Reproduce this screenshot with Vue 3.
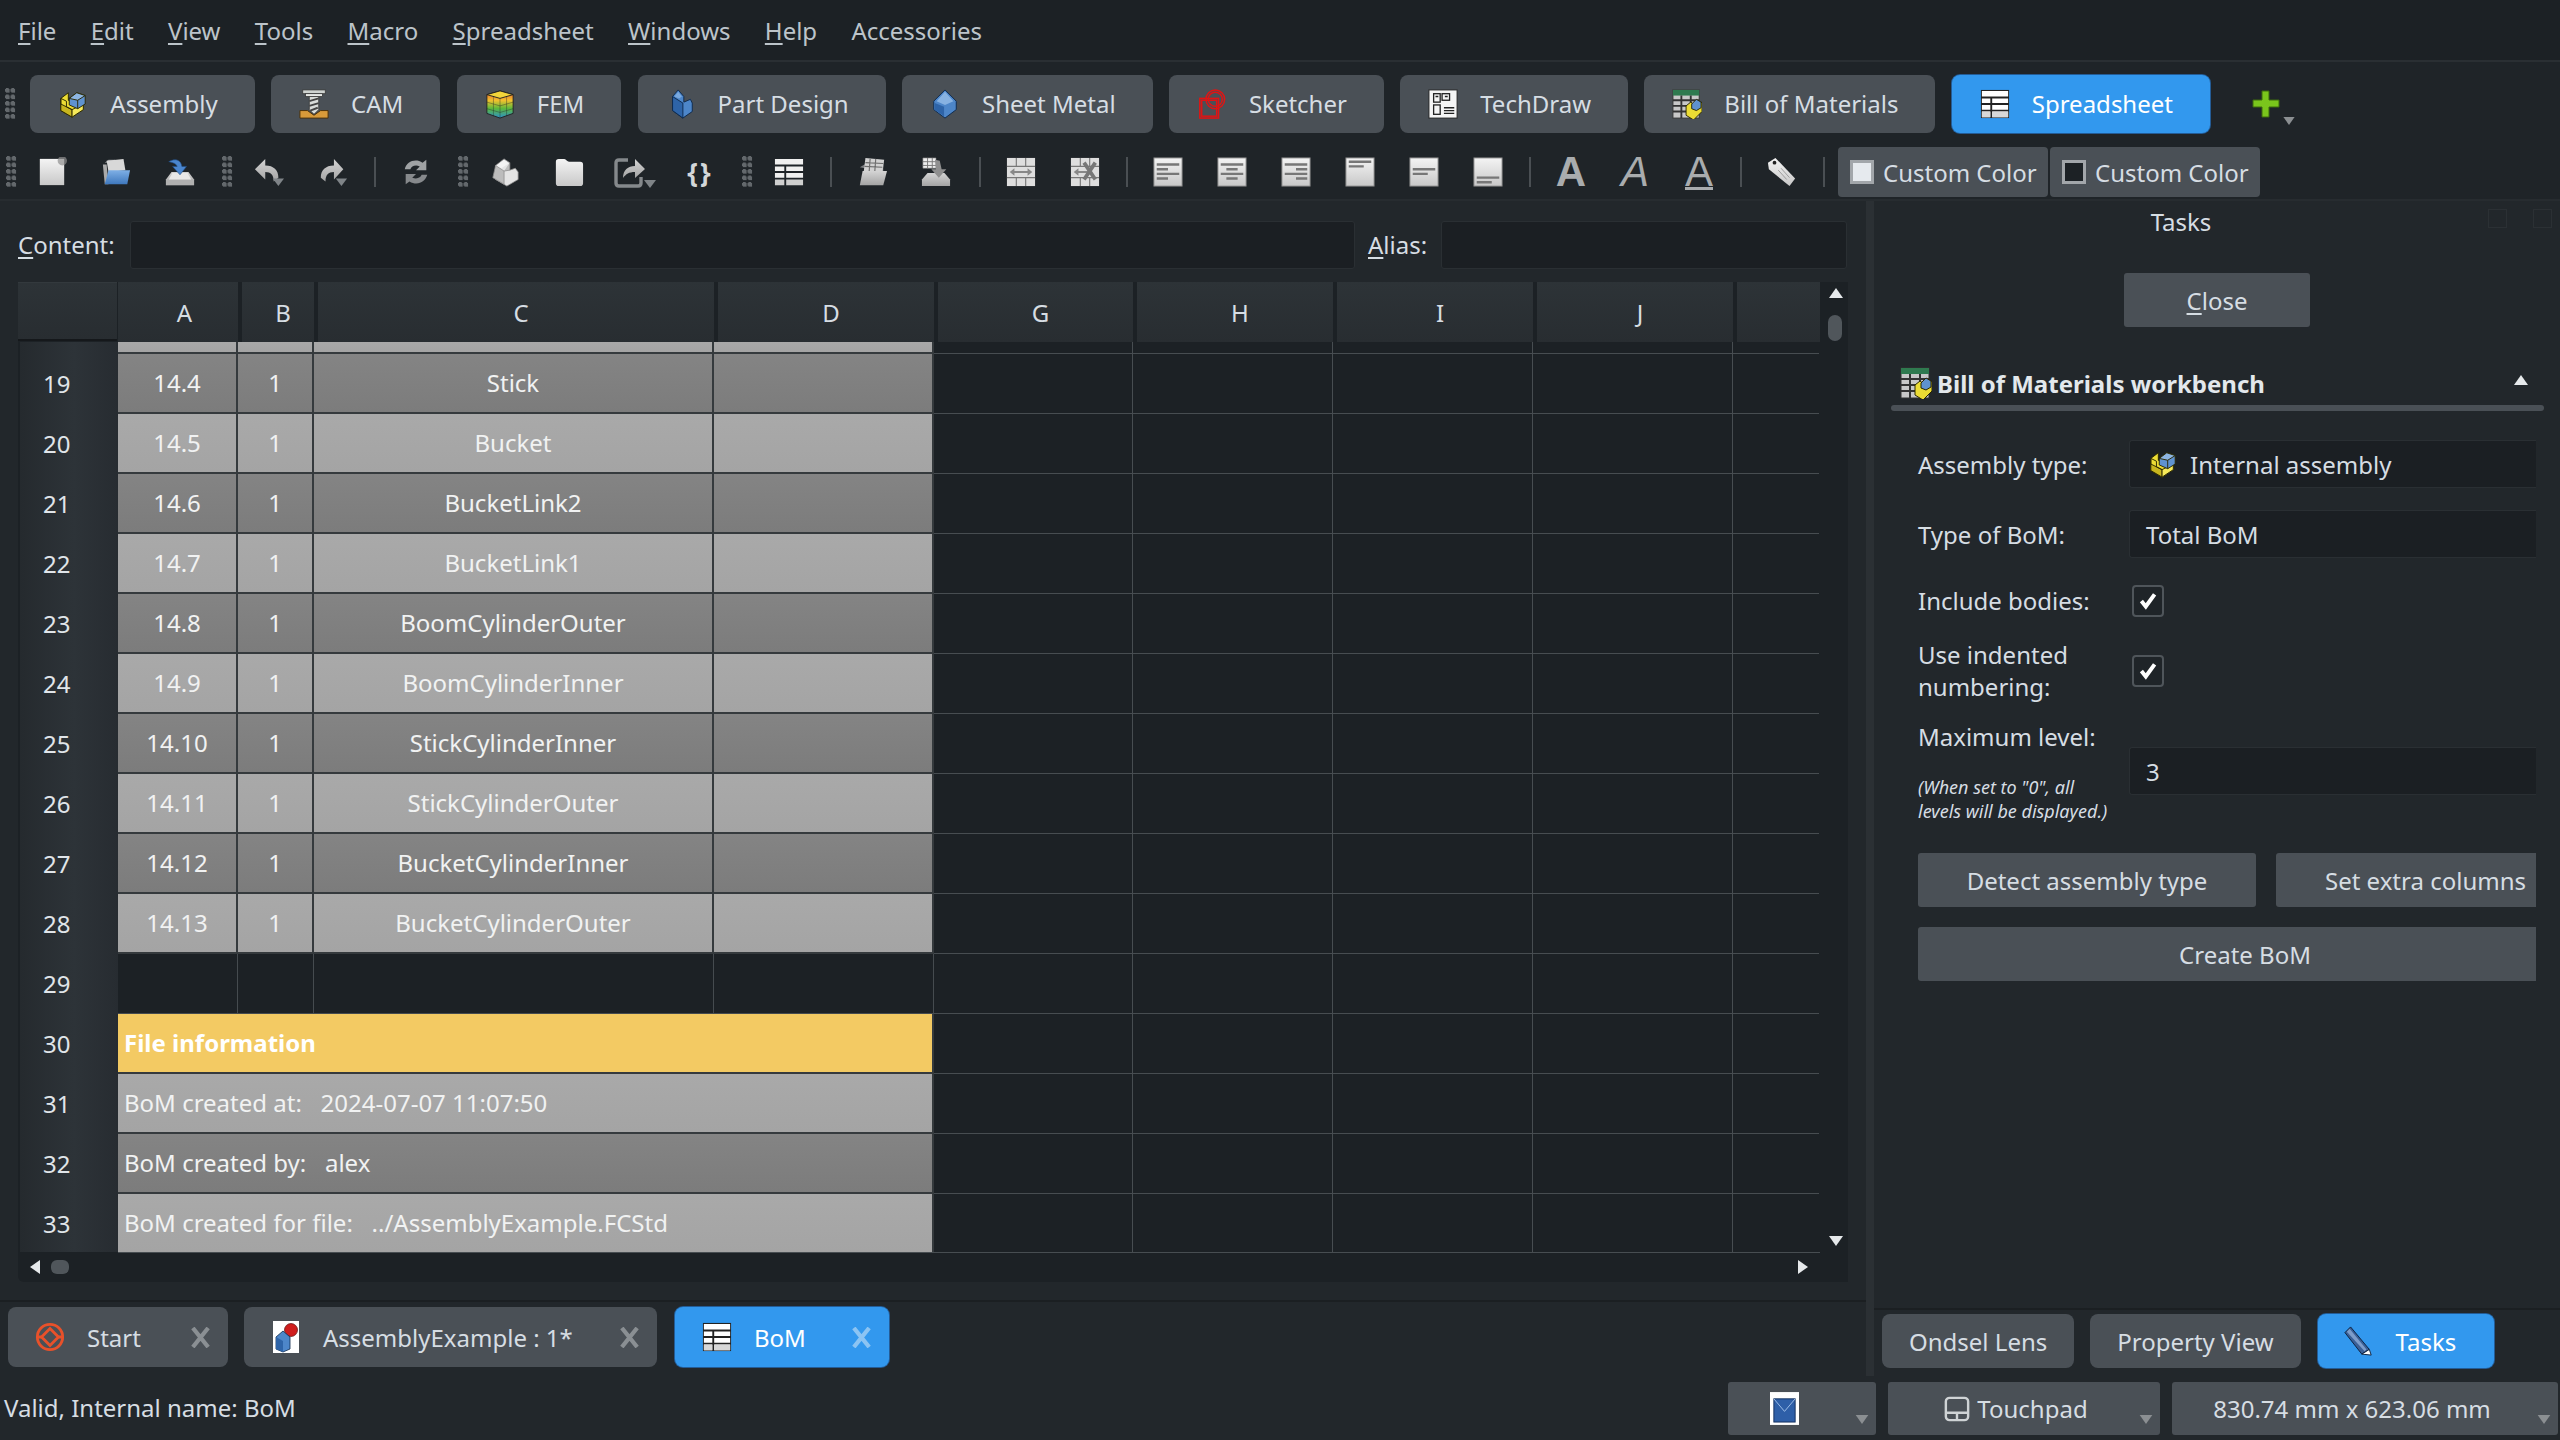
<template>
  <div class="app">
    <!-- icon sprite -->
    <svg class="sprite" width="0" height="0">
      <defs>
        <linearGradient id="pg" x1="0" y1="0" x2="0" y2="1"><stop offset="0" stop-color="#f4f4f4"/><stop offset="1" stop-color="#c8c8c8"/></linearGradient>
        <linearGradient id="gy" x1="0" y1="0" x2="0" y2="1"><stop offset="0" stop-color="#d4d4d4"/><stop offset="1" stop-color="#a4a4a4"/></linearGradient>
        <linearGradient id="bl" x1="0" y1="0" x2="0" y2="1"><stop offset="0" stop-color="#7fb0e6"/><stop offset="1" stop-color="#3f78bd"/></linearGradient>
        <linearGradient id="rb" x1="0" y1="0" x2="0" y2="1"><stop offset="0" stop-color="#e8562a"/><stop offset=".35" stop-color="#f2c12e"/><stop offset=".65" stop-color="#5cb83c"/><stop offset="1" stop-color="#2c8fc9"/></linearGradient>
        <symbol id="assembly" viewBox="0 0 32 32">
          <g stroke="#2a2600" stroke-width="1" stroke-linejoin="round">
            <path fill="#ecdc34" d="M3 10 11 4v8l6 3 10-4v11L15 30 3 23z"/>
            <path fill="#c9b61e" d="M3 16l12 6v8L3 23z"/>
            <path fill="#f7ea5a" d="M15 22l12-6v6l-12 8z"/>
            <path fill="none" d="M3 16v-6l6 3v6M15 22l-6-3"/>
            <path fill="#5f92cf" d="M12 10l8-6 9 3v9l-8 5-9-4z"/>
            <path fill="#8db5e2" d="M12 10l8-6 9 3-8 5z"/>
            <path fill="none" d="M21 12v9"/>
          </g>
        </symbol>
        <symbol id="cam" viewBox="0 0 32 32">
          <rect x="4" y="1" width="24" height="4" fill="#cfd3d0" stroke="#333" stroke-width=".8"/>
          <rect x="7" y="5" width="18" height="3" fill="#e6e8e6" stroke="#333" stroke-width=".8"/>
          <path fill="#d8dbd8" stroke="#333" stroke-width=".8" d="M11 8h10v14l-5 5-5-5z"/>
          <path stroke="#444" stroke-width="2" d="M11 13l10-3M11 18l10-3M12 23l8-3"/>
          <path fill="#d89a3a" stroke="#4a2f08" stroke-width="1" d="M1 23h8l7 5 7-5h8v8H1z"/>
        </symbol>
        <symbol id="fem" viewBox="0 0 32 32">
          <path fill="url(#rb)" stroke="#222" stroke-width="1" d="M2 6l14-4 14 4v20l-14 5-14-5z"/>
          <path fill="#f2d43a" stroke="#222" stroke-width="1" d="M2 6l14-4 14 4-14 4z"/>
          <path fill="none" stroke="#2226" stroke-width="1" d="M16 10v21M9 8v21M23 8v21M2 14l14 4 14-4M2 21l14 4 14-4"/>
        </symbol>
        <symbol id="partdesign" viewBox="0 0 32 32">
          <path fill="#4d86c9" stroke="#0e2a4d" stroke-width="1" stroke-linejoin="round" d="M7 8l6-7 6 7v6l7-3 2 4v9l-10 7-11-8z"/>
          <path fill="#2e64a8" stroke="#0e2a4d" stroke-width="1" d="M7 8l11 7v16L7 23z"/>
          <path fill="#7aa9de" d="M13 3l4 5-3 2-5-2z"/>
        </symbol>
        <symbol id="sheetmetal" viewBox="0 0 32 32">
          <path fill="#4d86c9" stroke="#0e2a4d" stroke-width="1" stroke-linejoin="round" d="M16 1l12 12v9L16 31 4 22v-9z"/>
          <path fill="#87b2e2" d="M16 3l9 10-9 4-9-4z"/>
          <path fill="#2e64a8" d="M5 15l10 4v10L5 22z"/>
        </symbol>
        <symbol id="sketcher" viewBox="0 0 32 32">
          <g fill="none" stroke="#e01414" stroke-width="1.6">
            <circle cx="19.5" cy="11" r="10"/><circle cx="19.5" cy="11" r="7.5"/>
            <rect x="3" y="10" width="20" height="21"/><rect x="5" y="12" width="16" height="17"/>
          </g>
        </symbol>
        <symbol id="techdraw" viewBox="0 0 32 32">
          <rect x="1" y="1" width="30" height="30" fill="#f5f5f5" stroke="#222"/>
          <g fill="none" stroke="#222" stroke-width="1.4">
            <rect x="6" y="5" width="7" height="9"/><rect x="15" y="5" width="8" height="7"/><rect x="6" y="17" width="7" height="10"/>
            <path d="M17 20h11M17 23h11M17 26h11"/><path d="M8 8h3M18 8h3"/>
          </g>
        </symbol>
        <symbol id="bom" viewBox="0 0 32 32">
          <rect x="1" y="1" width="28" height="30" fill="#c8c8c8" stroke="#333"/>
          <rect x="1" y="1" width="28" height="6" fill="#2f7a4f"/>
          <path stroke="#333" stroke-width="2" d="M1 12h28M1 18h28M1 24h28M10 7v24M20 7v24"/>
          <g stroke="#2a2600" stroke-width="1" stroke-linejoin="round">
            <path fill="#ecdc34" d="M15 18l5-4 4 3 8-3v10l-9 9-8-5z"/>
            <path fill="#5f92cf" d="M21 16l5-5 5 3v6l-5 3-5-2z"/>
          </g>
        </symbol>
        <symbol id="sheet" viewBox="0 0 32 32">
          <rect x="1" y="1" width="30" height="30" fill="#222"/>
          <path fill="#fff" d="M2 2h28v6H2zM2 10h9v5H2zM13 10h17v5H13zM2 17h9v5H2zM13 17h17v5H13zM2 24h9v6H2zM13 24h17v6H13z"/>
          <path fill="#d8d8d8" d="M2 24h9v6H2zM13 24h17v6H13z"/>
        </symbol>
        <symbol id="plus" viewBox="0 0 28 28">
          <path fill="#7ac51c" stroke="#3d6b0c" stroke-width="1" d="M10 1h7v9h10v7H17v10h-7V17H1v-7h9z"/>
        </symbol>
        <symbol id="newdoc" viewBox="0 0 32 32">
          <path fill="url(#pg)" d="M3 2h26v28H3z"/><circle cx="27" cy="4" r="5" fill="#8e8e8e" opacity=".7"/>
        </symbol>
        <symbol id="open" viewBox="0 0 32 32">
          <path fill="#8d8f92" d="M4 6l4-3h7l1 3z"/>
          <path fill="#d8d8d8" d="M6 4l18-2 2 12-18 2z"/>
          <path fill="#aaa" d="M2 8h4l2 21H4z"/>
          <path fill="url(#bl)" d="M8 14h23l-3 15H4z"/>
        </symbol>
        <symbol id="save" viewBox="0 0 32 32">
          <path fill="url(#gy)" d="M7 16h18l6 8v6H1v-6z"/>
          <rect x="1" y="24" width="30" height="6" fill="#b0b0b0"/>
          <path fill="#e8e8e8" d="M8 17h16l4 7H4z"/>
          <path fill="#4a86cf" stroke="#1f4a80" stroke-width=".6" d="M4 5c7-4 13-2 14 5h5l-7 9-8-9h5c-1-3-4-4-9-5z"/>
        </symbol>
        <symbol id="undo" viewBox="0 0 32 32">
          <path fill="url(#gy)" d="M1 13 12 2v7c9 0 14 5 14 13l-5 4c0-7-3-10-9-10v8z"/>
          <path fill="#7f8488" d="M20 23h12l-6 8z"/>
        </symbol>
        <symbol id="redo" viewBox="0 0 32 32">
          <path fill="url(#gy)" d="M27 13 17 2v7C8 9 3 14 3 22l5 4c0-7 3-10 9-10v8z"/>
          <path fill="#7f8488" d="M19 23h12l-6 8z"/>
        </symbol>
        <symbol id="refresh" viewBox="0 0 32 32">
          <path fill="#9fa2a4" d="M4 13C6 5 15 1 23 6l4-3v11H16l4-4c-5-2-9 0-10 3z"/>
          <path fill="#86898c" d="M28 19c-2 8-11 12-19 7l-4 3V18h11l-4 4c5 2 9 0 10-3z"/>
        </symbol>
        <symbol id="part" viewBox="0 0 32 32">
          <path fill="#e4e4e4" stroke="#8b8b8b" stroke-width=".8" stroke-linejoin="round" d="M6 9l9-7 6 4v8l6-2 3 4v8l-12 7-12-7z"/>
          <path fill="#bcbcbc" stroke="#8b8b8b" stroke-width=".8" d="M6 9l9 6v14l-12-7zM15 15l6-1v-8"/>
          <path fill="#f3f3f3" d="M7 9l8-6 5 4-8 5z"/>
        </symbol>
        <symbol id="folder" viewBox="0 0 32 32">
          <path fill="url(#pg)" d="M2 5c0-2 1-3 3-3h6c2 0 3 3 5 3h12c2 0 3 1 3 3v20c0 2-1 3-3 3H5c-2 0-3-1-3-3z"/>
        </symbol>
        <symbol id="link" viewBox="0 0 42 32">
          <path fill="none" stroke="#85898c" stroke-width="3.4" stroke-linejoin="round" d="M14 4H5c-2 0-3 1-3 3v20c0 2 1 3 3 3h19c2 0 3-1 3-3v-6"/>
          <path fill="url(#gy)" d="M9 22c0-8 5-12 12-12V3l10 10-10 9v-6c-6 0-9 2-12 6z"/>
          <path fill="#7f8488" d="M30 24h12l-6 8z"/>
        </symbol>
        <symbol id="table" viewBox="0 0 32 32">
          <path fill="#f0f0f0" d="M1 2h30v6H1zM1 10h10v5H1zM13 10h18v5H13zM1 17h10v5H1zM13 17h18v5H13z"/>
          <path fill="#cfcfcf" d="M1 24h10v6H1zM13 24h18v6H13z"/>
        </symbol>
        <symbol id="impsheet" viewBox="0 0 32 32">
          <path fill="#7b7d80" d="M3 11l5-3h20v8z"/>
          <path fill="#d2d2d2" d="M9 1l20 2-2 14H7z"/>
          <path stroke="#6c6c6c" stroke-width="1.2" d="M9 6l19 1M8 10l19 1M14 2l-1 13M20 2l-1 13"/>
          <path fill="url(#gy)" d="M6 15h26l-4 15H3z"/>
        </symbol>
        <symbol id="expsheet" viewBox="0 0 32 32">
          <path fill="#eee" stroke="#777" stroke-width=".6" d="M2 1h14v11H2z"/>
          <path stroke="#777" d="M2 5h14M2 9h14M7 1v11M12 1v11"/>
          <path fill="url(#gy)" d="M7 17h18l6 7v7H1v-7z"/>
          <path fill="#8f8f8f" d="M15 3l5 1 2 9h5l-8 9-8-9h5z"/>
        </symbol>
        <symbol id="merge" viewBox="0 0 32 32">
          <rect x="1" y="1" width="30" height="30" fill="#dedede"/>
          <path stroke="#777" stroke-width="1.2" d="M11 1v9M21 1v9M1 10h30M1 22h30M11 22v9M21 22v9"/>
          <path fill="#888" d="M4 16l5-4v3h14v-3l5 4-5 4v-3H9v3z"/>
        </symbol>
        <symbol id="split" viewBox="0 0 32 32">
          <rect x="1" y="1" width="30" height="30" fill="#dedede"/>
          <path stroke="#777" stroke-width="1.2" d="M11 1v9M21 1v9M1 10h30M1 22h30M11 22v9M21 22v9"/>
          <path fill="#888" d="M4 16l5-4v3h10v2H9v3z"/>
          <path stroke="#777" stroke-width="4" d="M15 6l12 18M27 6L15 24"/>
        </symbol>
        <symbol id="al" viewBox="0 0 32 32"><rect x="1" y="1" width="30" height="30" fill="url(#pg)" stroke="#8a8a8a"/><path stroke="#777" stroke-width="2.6" d="M4 8h24M4 13h12M4 18h24M4 23h12"/></symbol>
        <symbol id="ac" viewBox="0 0 32 32"><rect x="1" y="1" width="30" height="30" fill="url(#pg)" stroke="#8a8a8a"/><path stroke="#777" stroke-width="2.6" d="M4 8h24M10 13h12M4 18h24M10 23h12"/></symbol>
        <symbol id="ar" viewBox="0 0 32 32"><rect x="1" y="1" width="30" height="30" fill="url(#pg)" stroke="#8a8a8a"/><path stroke="#777" stroke-width="2.6" d="M4 8h24M16 13h12M4 18h24M16 23h12"/></symbol>
        <symbol id="at" viewBox="0 0 32 32"><rect x="1" y="1" width="30" height="30" fill="url(#pg)" stroke="#8a8a8a"/><path stroke="#777" stroke-width="2.6" d="M4 5h24M4 10h16"/></symbol>
        <symbol id="am" viewBox="0 0 32 32"><rect x="1" y="1" width="30" height="30" fill="url(#pg)" stroke="#8a8a8a"/><path stroke="#777" stroke-width="2.6" d="M4 13h24M4 18h16"/></symbol>
        <symbol id="ab" viewBox="0 0 32 32"><rect x="1" y="1" width="30" height="30" fill="url(#pg)" stroke="#8a8a8a"/><path stroke="#777" stroke-width="2.6" d="M4 22h24M4 27h16"/></symbol>
        <symbol id="tag" viewBox="0 0 32 32">
          <path fill="url(#pg)" d="M1 6l8-5 21 22-6 8L2 13z"/>
          <circle cx="8" cy="6" r="2" fill="#222"/>
          <path stroke="#999" d="M12 14l9 10M15 12l9 10"/>
        </symbol>
        <symbol id="start" viewBox="0 0 32 32">
          <g fill="none" stroke="#e8512a" stroke-width="3">
            <circle cx="16" cy="16" r="13.5"/><path d="M16 7l9 9-9 9-9-9z"/><path d="M3 16h4M25 16h4"/>
          </g>
        </symbol>
        <symbol id="doc" viewBox="0 0 26 32">
          <rect width="26" height="32" fill="#fff"/>
          <circle cx="18" cy="9" r="6.5" fill="#cf1d1d" stroke="#5a0b0b" stroke-width=".7"/>
          <path fill="#4d86c9" stroke="#0e2a4d" stroke-width=".8" d="M3 16l7-6 7 6v12l-7 3-7-3z"/>
          <path fill="#2e64a8" d="M3 16l7 4v11l-7-3z"/>
        </symbol>
        <symbol id="pencil" viewBox="0 0 32 32">
          <path fill="#3b5f95" stroke="#0c1f3c" stroke-width="1" d="M1 7l6-6 20 24-8 5z"/>
          <path fill="#7d9cc9" d="M3 6l3-3 18 22-2 2z"/>
          <path fill="#fff" stroke="#0c1f3c" stroke-width="1" d="M19 30l8-5 2 6z"/>
        </symbol>
        <symbol id="navdoc" viewBox="0 0 30 34">
          <rect width="30" height="34" fill="#fff"/>
          <rect x="4" y="7" width="22" height="24" fill="#2e5fa8" stroke="#12305e"/>
          <path fill="none" stroke="#9fbfe8" d="M4 7l11 13L26 7"/>
        </symbol>
        <symbol id="touchpad" viewBox="0 0 28 28">
          <path fill="none" stroke="#cfd3d5" stroke-width="2.6" d="M6 2h16a4 4 0 0 1 4 4v16a4 4 0 0 1-4 4H6a4 4 0 0 1-4-4V6a4 4 0 0 1 4-4zM2 18h24M14 18v8"/>
        </symbol>
        <symbol id="x" viewBox="0 0 22 22">
          <path stroke-width="4.4" stroke="currentColor" d="M3 1l16 20M19 1L3 21"/>
        </symbol>
        <symbol id="tri" viewBox="0 0 14 10"><path fill="#8b8f92" d="M0 0h14l-7 10z"/></symbol>
      </defs>
    </svg>

    <nav class="menubar">
      <span v-for="m in menus" :key="m.key" class="menu-item"><u>{{ m.u }}</u>{{ m.rest }}</span>
    </nav>

    <div class="wb-bar">
      <span class="grip"></span>
      <button v-for="w in workbenches" :key="w.name" class="wb-btn" :class="{ active: w.active }">
        <svg class="wb-icon"><use :href="'#' + w.icon" /></svg>
        {{ w.name }}
      </button>
      <div class="wb-plus">
        <svg class="plus"><use href="#plus" /></svg>
        <svg class="plus-tri"><use href="#tri" /></svg>
      </div>
    </div>

    <div class="tool-bar">
      <template v-for="(t, i) in tools" :key="i">
        <span v-if="t === 'grip'" class="grip tool-grip"></span>
        <span v-else-if="t === 'sep'" class="tool-sep"></span>
        <span v-else-if="t === 'sepw'" class="tool-sep wider"></span>
        <span v-else-if="t === 'braces'" class="tool-btn"><span class="braces">{}</span></span>
        <span v-else-if="t === 'A'" class="tool-btn"><span class="font-a bold">A</span></span>
        <span v-else-if="t === 'Ai'" class="tool-btn"><span class="font-a ital">A</span></span>
        <span v-else-if="t === 'Au'" class="tool-btn"><span class="font-a under">A</span></span>
        <span v-else class="tool-btn" :class="{ wide: t === 'link' }">
          <svg class="tool-icon" :class="{ wide: t === 'link' }"><use :href="'#' + t" /></svg>
        </span>
      </template>
      <span class="color-btn first"><i class="swatch light"></i>Custom Color</span>
      <span class="color-btn"><i class="swatch dark"></i>Custom Color</span>
    </div>

    <div class="main">
      <section class="left">
        <div class="content-row">
          <label class="content-label"><u>C</u>ontent:</label>
          <div class="line-input content-input"></div>
          <label class="alias-label"><u>A</u>lias:</label>
          <div class="line-input alias-input"></div>
        </div>

        <div class="sheet">
          <div class="sheet-top">
            <div class="grid">
              <div class="corner"></div>
              <div v-for="c in columns" :key="c" class="col-head">{{ c }}</div>
              <div class="col-head last"></div>

              <div class="row-head"></div>
              <div v-for="n in 4" :key="'p' + n" class="cell light"></div>
              <div v-for="n in 4" :key="'pe' + n" class="cell empty"></div>
              <div class="cell empty end"></div>

              <template v-for="r in rows" :key="r.n">
                <div class="row-head">{{ r.n }}</div>
                <template v-if="r.span">
                  <div class="cell merged" :class="[r.tone, { strong: r.tone === 'yellow' }]">{{ r.span }}</div>
                </template>
                <template v-else>
                  <div class="cell" :class="r.tone">{{ r.a }}</div>
                  <div class="cell" :class="r.tone">{{ r.b }}</div>
                  <div class="cell" :class="r.tone">{{ r.c }}</div>
                  <div class="cell" :class="r.tone"></div>
                </template>
                <div v-for="n in 4" :key="n" class="cell empty"></div>
                <div class="cell empty end"></div>
              </template>
            </div>
            <div class="v-scroll">
              <span class="arrow up"></span>
              <span class="v-thumb"></span>
              <span class="arrow down"></span>
            </div>
          </div>
          <div class="h-scroll">
            <span class="arrow left-a"></span>
            <span class="h-thumb"></span>
            <span class="arrow right-a"></span>
          </div>
        </div>

        <div class="doc-tabs">
          <div v-for="d in docTabs" :key="d.name" class="doc-tab" :class="[d.cls, { active: d.active }]">
            <svg class="doc-icon" :class="{ 'is-doc': d.icon === 'doc' }"><use :href="'#' + d.icon" /></svg>
            <span class="doc-name">{{ d.name }}</span>
            <svg class="doc-x"><use href="#x" /></svg>
          </div>
        </div>
      </section>

      <div class="splitter"></div>

      <aside class="right">
        <div class="tasks-head">
          <span class="tasks-title">Tasks</span>
          <span class="ghost g1"></span>
          <span class="ghost g2"></span>
        </div>
        <div class="close-wrap"><button class="plain-btn close-btn"><u>C</u>lose</button></div>

        <div class="section-head">
          <svg class="section-icon"><use href="#bom" /></svg>
          <span class="section-title">Bill of Materials workbench</span>
          <span class="arrow up small"></span>
        </div>
        <div class="section-rule"></div>

        <div class="form">
          <div class="form-row r1">
            <span class="flabel">Assembly type:</span>
            <div class="line-input combo"><svg class="combo-icon"><use href="#assembly" /></svg>Internal assembly</div>
          </div>
          <div class="form-row r2">
            <span class="flabel">Type of BoM:</span>
            <div class="line-input combo plain">Total BoM</div>
          </div>
          <div class="form-row r3">
            <span class="flabel">Include bodies:</span>
            <span class="check"><svg viewBox="0 0 20 20"><path d="M4 10l4 5 8-11" /></svg></span>
          </div>
          <div class="form-row r4">
            <span class="flabel two">Use indented<br />numbering:</span>
            <span class="check"><svg viewBox="0 0 20 20"><path d="M4 10l4 5 8-11" /></svg></span>
          </div>
          <div class="form-row r5">
            <div class="flabel stack">
              <span>Maximum level:</span>
              <small>(When set to "0", all<br />levels will be displayed.)</small>
            </div>
            <div class="line-input combo plain level">3</div>
          </div>
          <div class="btn-row">
            <button class="plain-btn detect">Detect assembly type</button>
            <button class="plain-btn extra">Set extra columns</button>
          </div>
          <button class="plain-btn create">Create BoM</button>
        </div>

        <div class="panel-tabs">
          <div class="panel-tab">Ondsel Lens</div>
          <div class="panel-tab">Property View</div>
          <div class="panel-tab active"><svg class="pencil"><use href="#pencil" /></svg>Tasks</div>
        </div>
      </aside>
    </div>

    <footer class="status">
      <span class="status-text">Valid, Internal name: BoM</span>
      <div class="status-box nav"><svg class="nav-icon"><use href="#navdoc" /></svg><svg class="status-tri"><use href="#tri" /></svg></div>
      <div class="status-box pad"><svg class="pad-icon"><use href="#touchpad" /></svg>Touchpad<svg class="status-tri"><use href="#tri" /></svg></div>
      <div class="status-box dim">830.74 mm x 623.06 mm<svg class="status-tri"><use href="#tri" /></svg></div>
    </footer>
  </div>
</template>

<script setup>
const menus = [
  { key: 'file', u: 'F', rest: 'ile' },
  { key: 'edit', u: 'E', rest: 'dit' },
  { key: 'view', u: 'V', rest: 'iew' },
  { key: 'tools', u: 'T', rest: 'ools' },
  { key: 'macro', u: 'M', rest: 'acro' },
  { key: 'sheet', u: 'S', rest: 'preadsheet' },
  { key: 'win', u: 'W', rest: 'indows' },
  { key: 'help', u: 'H', rest: 'elp' },
  { key: 'acc', u: '', rest: 'Accessories' },
]

const workbenches = [
  { name: 'Assembly', icon: 'assembly' },
  { name: 'CAM', icon: 'cam' },
  { name: 'FEM', icon: 'fem' },
  { name: 'Part Design', icon: 'partdesign' },
  { name: 'Sheet Metal', icon: 'sheetmetal' },
  { name: 'Sketcher', icon: 'sketcher' },
  { name: 'TechDraw', icon: 'techdraw' },
  { name: 'Bill of Materials', icon: 'bom' },
  { name: 'Spreadsheet', icon: 'sheet', active: true },
]

const tools = [
  'grip', 'newdoc', 'open', 'save',
  'grip', 'undo', 'redo', 'sep', 'refresh',
  'grip', 'part', 'folder', 'link', 'braces',
  'grip', 'table', 'sep', 'impsheet', 'expsheet', 'sepw', 'merge', 'split', 'sep',
  'al', 'ac', 'ar', 'at', 'am', 'ab', 'sep', 'A', 'Ai', 'Au', 'sep', 'tag', 'sep',
]

const columns = ['A', 'B', 'C', 'D', 'G', 'H', 'I', 'J']

const parts = [
  ['14.4', 'Stick'],
  ['14.5', 'Bucket'],
  ['14.6', 'BucketLink2'],
  ['14.7', 'BucketLink1'],
  ['14.8', 'BoomCylinderOuter'],
  ['14.9', 'BoomCylinderInner'],
  ['14.10', 'StickCylinderInner'],
  ['14.11', 'StickCylinderOuter'],
  ['14.12', 'BucketCylinderInner'],
  ['14.13', 'BucketCylinderOuter'],
]

const rows = [
  ...parts.map((p, i) => ({ n: 19 + i, a: p[0], b: '1', c: p[1], tone: i % 2 ? 'light' : 'dark' })),
  { n: 29, a: '', b: '', c: '', tone: 'blank' },
  { n: 30, span: 'File information', tone: 'yellow' },
  { n: 31, span: 'BoM created at:   2024-07-07 11:07:50', tone: 'light' },
  { n: 32, span: 'BoM created by:   alex', tone: 'dark' },
  { n: 33, span: 'BoM created for file:   ../AssemblyExample.FCStd', tone: 'light' },
]

const docTabs = [
  { name: 'Start', icon: 'start', cls: 't-start' },
  { name: 'AssemblyExample : 1*', icon: 'doc', cls: 't-doc' },
  { name: 'BoM', icon: 'sheet', cls: 't-bom', active: true },
]
</script>

<style scoped>
.app{
  width:2560px;
  height:1440px;
  display:flex;
  flex-direction:column;
  overflow:hidden;
  background:#22272b;
  color:#d6dde3;
  font-family:"Noto Sans",sans-serif;
  font-size:24px;
}
.sprite{position:absolute}
button{font:inherit;color:inherit;border:none;padding:0}
u{text-underline-offset:3px}

.menubar{
  height:60px;
  flex:none;
  display:flex;
  align-items:center;
  gap:34.3px;
  padding-left:18px;
  background:#1c2125;
  border-bottom:2px solid #2a2f33;
  box-sizing:content-box;
  color:#bcc4ca;
}

.wb-bar{
  height:75px;
  flex:none;
  display:flex;
  align-items:center;
  gap:16.3px;
  padding-left:5px;
  padding-top:8px;
  background:#1f2428;
  box-sizing:border-box;
}
.grip{
  width:11px;
  height:32px;
  flex:none;
  background:radial-gradient(circle at 2.5px 2.5px,#63686c 2.5px,transparent 2.5px) 0 0/5.5px 6.5px;
}
.wb-bar .grip{margin-right:-2px}
.wb-btn{
  height:58px;
  display:flex;
  align-items:center;
  gap:22px;
  padding:0 37px 0 28px;
  background:#4a5056;
  border-radius:8px;
  color:#d6dde3;
}
.wb-btn.active{background:#3298ee;color:#fff;box-shadow:0 0 0 1px #245c96}
.wb-icon{width:30px;height:30px;flex:none}
.wb-plus{display:flex;margin-left:26px;align-items:flex-end}
.plus{width:28px;height:28px}
.plus-tri{width:14px;height:8px;margin-left:2px;margin-bottom:-7px}

.tool-bar{
  height:64px;
  flex:none;
  display:flex;
  align-items:center;
  padding-left:6px;
  padding-top:8px;
  background:#1f2428;
  border-bottom:2px solid #272c30;
  box-sizing:border-box;
}
.tool-grip{margin:0 4px 0 10px}
.tool-grip:first-child{margin-left:0;margin-right:3px}
.tool-btn{
  width:64px;
  height:32px;
  display:flex;
  align-items:center;
  justify-content:center;
  flex:none;
}
.tool-btn.wide{width:67px}
.tool-icon{width:30px;height:30px}
.tool-icon.wide{width:42px;height:32px}
.tool-sep{width:2px;height:30px;margin:0 8px 0 9px;background:#4a4f53;flex:none}
.tool-sep.wider{margin-left:11px}
.braces{font-family:"Noto Sans",sans-serif;font-weight:700;font-size:27px;line-height:32px;color:#d4d7d9;letter-spacing:2px}
.font-a{font-family:"Liberation Sans",sans-serif;font-size:42px;line-height:32px;color:#a9acae}
.font-a.bold{font-weight:700}
.font-a.ital{font-style:italic}
.font-a.under{text-decoration:underline;text-decoration-thickness:3px;text-underline-offset:1px}
.color-btn{
  width:210px;
  height:50px;
  display:flex;
  align-items:center;
  padding-left:12px;
  box-sizing:border-box;
  background:#4a5056;
  border-radius:4px;
  margin-left:2px;
  flex:none;
}
.color-btn.first{margin-left:5px}
.swatch{width:24px;height:24px;box-sizing:border-box;border:3px solid #a2a6aa;margin-right:9px;flex:none}
.swatch.light{background:#e6eaee}
.swatch.dark{background:#1c2125}

.main{
  flex:1;
  display:flex;
  min-height:0;
}
.left{
  width:1866px;
  display:flex;
  flex-direction:column;
}
.content-row{
  height:81px;
  display:flex;
  align-items:center;
  padding-top:6px;
  padding-left:18px;
  box-sizing:border-box;
}
.content-label{width:112px}
.line-input{
  background:#1b1f23;
  border:1px solid #2a2f33;
  box-sizing:border-box;
  border-radius:3px;
}
.content-input{width:1225px;height:48px}
.alias-label{margin-left:13px;width:73px}
.alias-input{width:406px;height:48px}

.sheet{
  margin-left:18px;
  width:1830px;
  height:1000px;
  flex:none;
  background:#1c2125;
  border-bottom-left-radius:6px;
}
.sheet-top{display:flex;height:970px}
.grid{
  width:1802px;
  height:970px;
  display:grid;
  grid-template-columns:100px 120px 76px 400px 220px 199px 200px 200px 200px 87px;
  grid-template-rows:60px 12px repeat(15,60px);
  overflow:hidden;
}
.corner{
  background:linear-gradient(#2d3337,#282d31);
  border-top:1px solid #33393d;
  border-bottom:2px solid #15181b;
  margin-bottom:1px;
  margin-right:1px;
}
.col-head{
  display:flex;
  align-items:center;
  justify-content:center;
  padding-left:10px;
  background:linear-gradient(#2d3337,#282d31);
  background-origin:border-box;
  border-left:4px solid #1c2125;
  box-sizing:border-box;
  color:#d6dde3;
}
.col-head:nth-child(2){border-left:none;padding-left:13px}
.row-head{
  margin-left:2px;
  display:flex;
  align-items:center;
  padding-left:23px;
  padding-bottom:1px;
  box-sizing:border-box;
  background:linear-gradient(90deg,#252a2e,#2d3338 55%,#272c31);
  color:#e0e5e9;
}
.cell{
  display:flex;
  align-items:center;
  justify-content:center;
  box-sizing:border-box;
  border-right:2px solid #353a3d;
  border-bottom:2px solid #353a3d;
  padding-bottom:2px;
  color:#f1f2f2;
  white-space:pre;
}
.cell.light{background:linear-gradient(#a9a9a9,#a4a4a4)}
.cell.dark{background:linear-gradient(#848484,#7c7c7c)}
.cell.blank{background:#1c2125;border-color:#454b4f;border-width:0 1px 1px 0}
.cell.empty{background:#1c2125;border-color:#474d51;border-width:0 1px 1px 0}
.cell.end{border-right:none;margin-right:1px}
.cell.yellow{background:#f3ca63}
.cell.merged{grid-column:span 4;justify-content:flex-start;padding-left:6px}
.cell.strong{font-weight:700;color:#fff}
.v-scroll{
  width:28px;
  display:flex;
  flex-direction:column;
  padding-left:9px;
  padding-top:6px;
  box-sizing:border-box;
}
.arrow{display:block;width:0;height:0}
.arrow.up{border-left:7px solid transparent;border-right:7px solid transparent;border-bottom:10px solid #e6e9eb}
.arrow.down{border-left:7px solid transparent;border-right:7px solid transparent;border-top:10px solid #e6e9eb;margin-top:auto;margin-bottom:6px}
.v-thumb{width:14px;height:26px;margin-top:17px;margin-left:-1px;border-radius:7px;background:#50565b}
.h-scroll{
  height:30px;
  box-sizing:border-box;
  display:flex;
  align-items:center;
  padding-left:12px;
  padding-right:12px;
  margin-right:28px;
  background:linear-gradient(#474d51,#474d51) 100px 0/1702px 1px no-repeat;
}
.arrow.left-a{border-top:7px solid transparent;border-bottom:7px solid transparent;border-right:10px solid #e6e9eb}
.arrow.right-a{border-top:7px solid transparent;border-bottom:7px solid transparent;border-left:10px solid #e6e9eb;margin-left:auto}
.h-thumb{width:18px;height:14px;margin-left:11px;border-radius:6px;background:#50565b}

.doc-tabs{
  margin-top:18px;
  border-top:2px solid #1b1f22;
  padding:5px 0 0 8px;
  display:flex;
  gap:16px;
}
.doc-tab{
  height:60px;
  display:flex;
  align-items:center;
  background:#4a5056;
  border-radius:8px;
  box-sizing:border-box;
  padding-left:27px;
  color:#d6dde3;
  position:relative;
}
.doc-tab.active{background:#3298ee;color:#fff;box-shadow:0 0 0 1px #245c96}
.t-start{width:220px}
.t-doc{width:413px}
.t-bom{width:214px;margin-left:2px}
.doc-icon{width:30px;height:30px;flex:none;margin-right:22px}
.doc-icon.is-doc{width:26px;height:32px;margin-right:24px;margin-left:2px}
.doc-x{
  position:absolute;
  right:17px;
  top:20px;
  width:21px;
  height:21px;
  color:#8a8f93;
}
.active .doc-x{color:#8cc4f3}

.splitter{width:8px;background:#2b3034;flex:none}
.right{
  width:686px;
  display:flex;
  flex-direction:column;
}
.tasks-head{
  height:40px;
  display:flex;
  align-items:center;
  justify-content:center;
  padding-right:72px;
  position:relative;
}
.ghost{
  position:absolute;
  top:8px;
  width:17px;
  height:17px;
  border:1px solid #2b3034;
}
.g1{left:614px}
.g2{left:659px}
.close-wrap{display:flex;justify-content:center;margin-top:32px}
.plain-btn{
  background:#4a5056;
  border-radius:3px;
  color:#d6dde3;
  display:flex;
  align-items:center;
  justify-content:center;
}
.close-btn{width:186px;height:54px}
.section-head{
  margin-top:40px;
  height:32px;
  display:flex;
  align-items:center;
  padding-left:26px;
  padding-right:32px;
}
.section-icon{width:32px;height:32px;flex:none;margin-right:5px}
.section-title{font-weight:700;color:#e3e8ec;flex:1}
.arrow.small{border-left-width:7px;border-right-width:7px;margin-bottom:6px}
.section-rule{
  margin:6px 16px 0 17px;
  height:6px;
  border-radius:3px;
  background:#4a5056;
}
.form{
  margin-top:29px;
  padding-left:44px;
  width:662px;
  box-sizing:border-box;
  display:flex;
  flex-direction:column;
  flex:1;
}
.form-row{display:flex;align-items:center;flex:none}
.flabel{width:211px;flex:none;color:#d6dde3}
.flabel.two{line-height:32px}
.combo{
  width:407px;
  height:48px;
  display:flex;
  align-items:center;
  padding-left:16px;
  border-right:none;
  border-radius:3px 0 0 3px;
  flex:none;
}
.combo-icon{width:30px;height:30px;margin:0 12px 0 2px;flex:none}
.r1{height:48px;margin-bottom:22px}
.r2{height:48px;margin-bottom:27px}
.r3{height:32px;margin-bottom:22px}
.r4{height:64px;margin-bottom:18px}
.r5{height:102px;margin-bottom:30px;align-items:flex-start}
.r3 .flabel{margin-top:-2px}
.level{margin-top:26px}
.stack{display:flex;flex-direction:column;margin-top:-1px}
.stack small{
  font-size:18px;
  font-style:italic;
  line-height:24px;
  margin-top:22px;
}
.check{
  width:32px;
  height:32px;
  margin-left:3px;
  box-sizing:border-box;
  border:2px solid #4f555a;
  border-radius:4px;
  background:#1f2428;
  display:flex;
  align-items:center;
  justify-content:center;
}
.check svg{width:22px;height:22px}
.check path{fill:none;stroke:#fff;stroke-width:3.6}
.btn-row{display:flex;gap:20px;margin-bottom:20px;flex:none}
.detect{width:338px;height:54px}
.extra{width:260px;height:54px;justify-content:flex-start;padding-left:49px;white-space:nowrap;border-radius:3px 0 0 3px}
.create{width:618px;height:54px;flex:none;padding-left:36px;box-sizing:border-box;border-radius:3px 0 0 3px}

.panel-tabs{
  height:68px;
  flex:none;
  border-top:2px solid #1b1f22;
  padding:4px 0 0 8px;
  display:flex;
  gap:16px;
  box-sizing:border-box;
}
.panel-tab{
  height:54px;
  padding:0 27px;
  display:flex;
  align-items:center;
  background:#4a5056;
  border-radius:8px;
  color:#d6dde3;
}
.panel-tab.active{background:#3298ee;color:#fff;box-shadow:0 0 0 1px #245c96;padding:0 38px 0 26px;margin-left:1px}
.pencil{width:30px;height:30px;margin-right:22px}

.status{
  height:64px;
  flex:none;
  display:flex;
  align-items:flex-start;
  padding-top:6px;
  box-sizing:border-box;
  background:#22272b;
}
.status-text{width:1728px;padding-left:4px;box-sizing:border-box;line-height:52px;color:#d6dde3}
.status-box{
  position:relative;
  height:53px;
  background:#4a5056;
  border-radius:3px;
  display:flex;
  align-items:center;
  justify-content:center;
  box-sizing:border-box;
  flex:none;
  color:#d6dde3;
}
.nav{width:148px;padding-right:36px}
.pad{width:272px;margin-left:12px;padding-right:16px}
.dim{width:386px;margin-left:12px;padding-right:26px}
.nav-icon{width:29px;height:33px}
.pad-icon{width:26px;height:26px;margin-right:7px}
.status-tri{
  position:absolute;
  right:7px;
  bottom:11px;
  width:14px;
  height:9px;
}
</style>

<style>
html,body{margin:0;background:#22272b}
</style>
